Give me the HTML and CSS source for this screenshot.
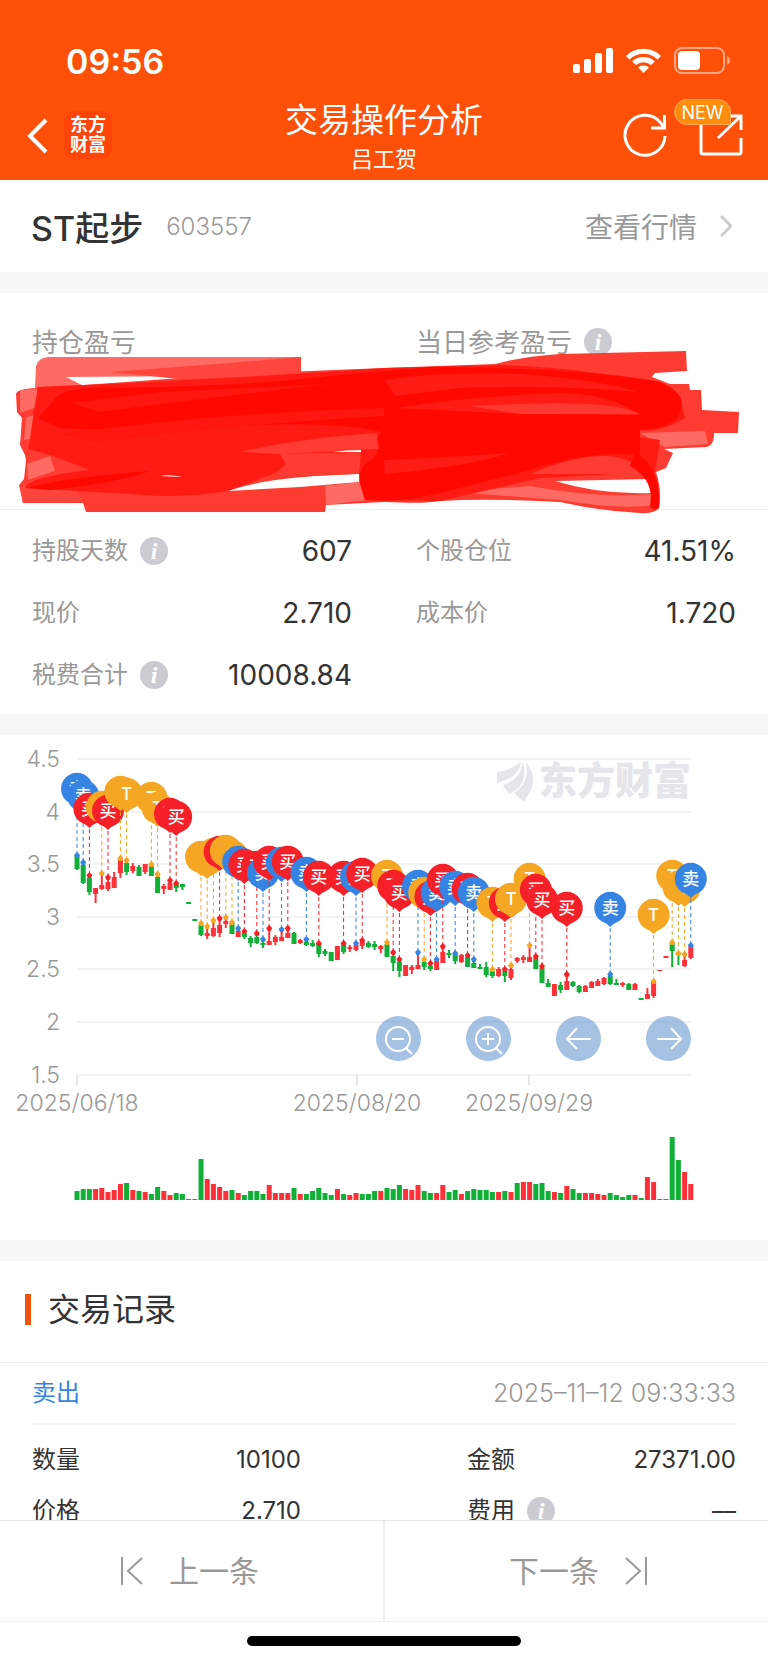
FILE: index.html
```html
<!DOCTYPE html>
<html lang="zh-CN">
<head>
    <meta charset="UTF-8">
    <meta name="viewport" content="width=device-width, initial-scale=1.0">
    <title>交易操作分析</title>
    <link rel="stylesheet" href="styles.css">
</head>
<body>
    <header class="header">
        <div class="status-bar">
            <span class="time">09:56</span>
            <svg class="status-icons" width="160" height="28" viewBox="0 0 160 28" aria-hidden="true">
                <rect x="1" y="17" width="7" height="9" rx="2"/>
                <rect x="12" y="12" width="7" height="14" rx="2"/>
                <rect x="23" y="6" width="7" height="20" rx="2"/>
                <rect x="34" y="1" width="7" height="25" rx="2"/>
                <path d="M54 9 A24.500 24.500 0 0 1 89 9 L85.500 12.500 A20 20 0 0 0 57.500 12.500 Z"/>
                <path d="M60 14.500 A17 17 0 0 1 83 14.500 L79 18 A11.500 11.500 0 0 0 64 18 Z"/>
                <path d="M66 20.500 A8.500 8.500 0 0 1 77 20.500 L71.500 26 Z"/>
                <rect class="battery" x="103" y="1" width="49" height="25" rx="7"/>
                <rect x="106" y="4" width="22" height="19" rx="4"/>
                <path class="battery-cap" d="M155 9 Q158 10 158 13.500 Q158 17 155 18 Z"/>
            </svg>
        </div>
        <div class="nav-bar">
            <div class="nav-left">
                <button class="icon-button" aria-label="返回">
                    <svg width="24" height="40" viewBox="0 0 24 40"><path d="M22 5 L6 21 L22 37" stroke-width="4"/></svg>
                </button>
                <a href="#" class="logo">东方<br>财富</a>
            </div>
            <div class="nav-title">
                <h1>交易操作分析</h1>
                <p>吕工贺</p>
            </div>
            <div class="nav-right">
                <button class="icon-button" aria-label="刷新">
                    <svg width="46" height="46" viewBox="0 0 46 46"><path d="M43 24 A20 20 0 1 1 38 10 L42 15 M42.500 3 V16 H29"/></svg>
                </button>
                <button class="icon-button share" aria-label="分享">
                    <svg width="46" height="46" viewBox="0 0 46 46"><path d="M3 13 V40 Q3 42 5 42 H41 Q43 42 43 40 V26 M29 4 H43 V18 M43 4 L20 26"/></svg>
                    <span class="badge">NEW</span>
                </button>
            </div>
        </div>
    </header>

    <main>
        <section class="stock">
            <h2>ST起步</h2>
            <span class="code">603557</span>
            <a href="#">查看行情
                <svg width="12" height="22" viewBox="0 0 12 22" aria-hidden="true"><path d="M1 1 L11 11 L1 21"/></svg>
            </a>
        </section>

        <section class="summary">
            <div class="profit">
                <div>持仓盈亏</div>
                <div>当日参考盈亏 <button class="info" aria-label="说明">i</button></div>
                <svg class="scribble" viewBox="0 340 768 180" aria-hidden="true">
                    <path fill="#ff6a62" d="M35 388 L36 366 Q38 358 48 357 L301 357 L301 374 L200 376 L66 377 L84 386 Z"/>
                    <path fill="#ff3b32" fill-rule="evenodd" d="M38 387 L85 385 L180 378 L260 373 L384 368 L495 364 Q520 357 560 354 L686 351 L687 371 L655 373 L652 377 L670 384 L689 384 L690 390 L701 390 L702 410 L739 412 L738 433 L714 433 Q714 446 706 447 L664 449 L673 453 L666 468 L656 472 Q662 490 659 508 Q655 514 640 513 Q600 511 560 502 Q490 498 440 501 Q425 504 384 502 L326 505 L325 512 L86 512 L83 503 L23 503 L19 485 L24 479 L26 461 L25 455 L20 445 L22 418 L17 412 L16 394 Q17 389 36 388 Z M228 491 Q270 476 359 474 L359 482 L300 487 Z M555 481 L650 479 L652 493 Q600 495 555 481 Z"/>
                    <path fill="#ff6a62" d="M20 390 L37 389 L37 407 L20 413 Z M26 417 L36 415 L36 438 L24 440 Z M27 464 L50 456 L55 471 L28 480 Z M325 486 L360 482 L366 500 L326 505 Z M455 492 L530 486 Q600 499 652 494 L655 505 Q620 510 560 500 Z M640 433 L705 431 L708 444 L664 447 Z"/>
                    <path fill="#ff453d" d="M110 372 L230 363 L301 357 L301 375 L180 379 Z M20 486 L75 489 L84 502 L23 503 Z"/>
                    <path fill="#ff1b13" d="M38 387 Q210 380 384 368 L500 365 Q630 370 680 396 L685 418 Q660 433 640 430 L640 437 L660 440 L655 472 L540 478 L440 501 L365 500 L359 474 L361 452 L280 454 L288 468 L228 491 Q180 499 130 494 L25 488 Q28 477 90 470 L50 455 L28 449 L30 440 L34 410 Z"/>
                    <path fill="#ff3b32" d="M240 452 Q300 438 377 433 L378 449 Q320 452 285 454 L355 454 L355 474 L270 478 L288 462 L280 454 Z M530 474 Q570 457 600 456 Q630 455 645 474 Z"/>
                    <path fill="#fff" d="M333 452 Q345 450 361 450 L361 452 Z M160 476 Q170 474 182 477 Z"/>
                    <path fill="#ff0800" d="M54 400 Q60 386 120 388 Q250 386 330 376 L430 367 Q590 368 660 382 Q688 394 680 412 Q675 428 640 430 L640 455 Q590 450 530 470 L440 493 Q400 503 365 500 L360 484 Q358 466 372 460 L380 448 Q374 436 382 432 Q340 422 260 425 Q140 432 60 428 L38 418 Z M28 488 Q60 478 150 471 Q120 482 50 490 Z M635 452 Q662 468 659 508 Q652 511 650 506 Q655 480 630 466 Z"/>
                    <path fill="#ff1c14" d="M395 408 Q470 396 560 393 Q610 393 640 415 L520 414 Z M385 380 Q440 371 520 374 Q590 378 640 392 Q540 384 460 388 L395 396 Z M384 460 Q440 458 510 453 Q470 466 385 474 Z"/>
                    <path fill="#ff3830" d="M470 406 Q550 402 590 404 Q622 406 640 414 L520 414 Z"/>
                    <path fill="#ff160e" d="M60 434 Q220 412 384 408 L384 416 Q240 424 90 442 Z M70 403 L160 392 L330 384 Q190 400 100 412 Z"/>
                </svg>
            </div>
            <dl class="stats">
                <div><dt>持股天数 <button class="info" aria-label="说明">i</button></dt><dd>607</dd></div>
                <div><dt>个股仓位</dt><dd>41.51%</dd></div>
                <div><dt>现价</dt><dd>2.710</dd></div>
                <div><dt>成本价</dt><dd>1.720</dd></div>
                <div><dt>税费合计 <button class="info" aria-label="说明">i</button></dt><dd>10008.84</dd></div>
            </dl>
        </section>

        <section class="chart">
            <svg id="chart" viewBox="0 0 768 505" role="img" aria-label="K线图">
                <g class="watermark">
                    <path d="M497 37 Q510 36 521 27 Q520 42 497 48 Z M522 28 Q521 44 503 50 L509 59 Q529 50 523 28 Z M526 27 Q537 40 531 55 L524 67 L514 58 Q530 48 526 27 Z"/>
                    <text x="539" y="59">东方财富</text>
                </g>
            </svg>
            <div class="chart-tools">
                <button aria-label="缩小"><svg viewBox="0 0 45 45"><circle cx="22" cy="23" r="12"/><path d="M16 23 H28 M30 32 L36 38"/></svg></button>
                <button aria-label="放大"><svg viewBox="0 0 45 45"><circle cx="22" cy="23" r="12"/><path d="M16 23 H28 M22 17 V29 M30 32 L36 38"/></svg></button>
                <button aria-label="左移"><svg viewBox="0 0 45 45"><path d="M35 23 H11 M21 12 L11 23 L21 33"/></svg></button>
                <button aria-label="右移"><svg viewBox="0 0 45 45"><path d="M11 23 H35 M25 12 L35 23 L25 33"/></svg></button>
            </div>
        </section>

        <section class="records">
            <h2>交易记录</h2>
            <article class="record">
                <div class="record-head">
                    <span class="sell">卖出</span>
                    <time datetime="2025-11-12T09:33:33">2025–11–12 09:33:33</time>
                </div>
                <dl class="record-body">
                    <div><dt>数量</dt><dd>10100</dd></div>
                    <div><dt>金额</dt><dd>27371.00</dd></div>
                    <div><dt>价格</dt><dd>2.710</dd></div>
                    <div><dt>费用 <button class="info" aria-label="说明">i</button></dt><dd>––</dd></div>
                </dl>
            </article>
        </section>
    </main>

    <footer class="footer">
        <div class="pager">
            <button>
                <svg width="24" height="30" viewBox="0 0 24 30" aria-hidden="true"><path d="M2 1 V29 M22 2 L8 15 L22 28"/></svg>
                上一条
            </button>
            <button>
                下一条
                <svg width="24" height="30" viewBox="0 0 24 30" aria-hidden="true"><path d="M22 1 V29 M2 2 L16 15 L2 28"/></svg>
            </button>
        </div>
        <div class="home-bar"></div>
    </footer>

    <script src="chart.js"></script>
</body>
</html>
```

FILE: styles.css
```css
* {
    box-sizing: border-box;
}

body {
    margin: 0;
    height: 100vh;
    display: flex;
    flex-direction: column;
    background: #fff;
    color: #333;
    font-family: Inter, "Noto Sans CJK SC", sans-serif;
    font-size: 24px;
}

h1, h2, p, dl, dt, dd {
    margin: 0;
    font-weight: 400;
}

a {
    color: inherit;
    text-decoration: none;
}

button {
    padding: 0;
    border: none;
    background: none;
    color: inherit;
    font: inherit;
    cursor: pointer;
}

svg {
    display: block;
}

/* header */
.header {
    flex: none;
    background: #ff5009;
    color: #fff;
}

.status-bar {
    display: flex;
    align-items: center;
    justify-content: space-between;
    height: 90px;
    padding: 32px 36px 0 66px;
}

.time {
    font-size: 34px;
    font-weight: 600;
}

.status-icons {
    fill: #fff;
}

.battery {
    fill: none;
    stroke: #ffa784;
    stroke-width: 2;
}

.battery-cap {
    fill: #ffa784;
}

.nav-bar {
    display: grid;
    grid-template-columns: 1fr auto 1fr;
    align-items: center;
    height: 90px;
    padding: 0 24px;
}

.nav-left, .nav-right {
    display: flex;
    align-items: center;
}

.nav-left {
    gap: 16px;
}

.nav-right {
    justify-content: flex-end;
    gap: 30px;
}

.logo {
    width: 48px;
    height: 48px;
    padding-top: 4px;
    border-radius: 10px;
    background: #ff4508;
    font-size: 18px;
    line-height: 20px;
    font-weight: 700;
    text-align: center;
}

.nav-title {
    padding-top: 2px;
    text-align: center;
}

.nav-title h1 {
    font-size: 33px;
    line-height: 46px;
}

.nav-title p {
    font-size: 22px;
    line-height: 32px;
}

.icon-button svg {
    fill: none;
    stroke: #fff;
    stroke-width: 3;
}

.share {
    position: relative;
}

.badge {
    position: absolute;
    top: -13px;
    right: 13px;
    width: 57px;
    height: 26px;
    border: 1px solid #ffab5a;
    border-radius: 13px 13px 0 13px;
    background: #ff8c0c;
    font-size: 18px;
    line-height: 25px;
    text-align: center;
}

/* content */
main {
    flex: 1;
    min-height: 0;
    overflow: auto;
    scrollbar-width: none;
}

section {
    border-bottom: 21px solid #f7f7f7;
}

.stock {
    display: flex;
    align-items: center;
    height: 113px;
    padding: 0 36px 0 31px;
}

.stock h2 {
    font-size: 34px;
    font-weight: 500;
}

.code {
    margin-left: 23px;
    color: #999;
    font-weight: 300;
}

.stock a {
    display: flex;
    align-items: center;
    gap: 23px;
    margin-left: auto;
    color: #999;
    font-size: 28px;
}

.stock a svg {
    fill: none;
    stroke: #ccc;
    stroke-width: 3;
}

.profit {
    position: relative;
    display: grid;
    grid-template-columns: 1fr 1fr;
    column-gap: 64px;
    height: 217px;
    padding: 30px 32px 0;
    border-bottom: 1px solid #eee;
    color: #999;
    font-size: 26px;
    line-height: 40px;
}

.profit div, dt {
    display: flex;
    align-items: flex-start;
    gap: 12px;
}

.scribble {
    position: absolute;
    top: 47px;
    left: 0;
    width: 100%;
}

.info {
    width: 28px;
    height: 28px;
    margin-top: 5px;
    border-radius: 50%;
    background: #cbccd1;
    color: #fff;
    font: italic bold 24px/28px "Liberation Serif", serif;
}

.stats {
    display: grid;
    grid-template-columns: 1fr 1fr;
    gap: 24px 64px;
    padding: 22px 32px 20px;
    line-height: 38px;
}

.stats div, .record-body div {
    display: flex;
    justify-content: space-between;
}

.stats dt {
    color: #999;
}

.stats dd {
    font-size: 28px;
}

/* chart */
.chart {
    position: relative;
}

.grid {
    stroke: #f3f3f3;
    stroke-width: 2;
}

.tick {
    stroke: #e6e6e6;
    stroke-width: 2;
}

.axis {
    fill: #999;
    font-size: 23px;
    font-weight: 300;
}

.watermark {
    fill: #e5e5ea;
}

.watermark text {
    font-size: 38px;
    font-weight: 900;
}

.up {
    fill: #ff3038;
}

.down {
    fill: #10b038;
}

.buy {
    color: #f52028;
}

.sold {
    color: #3583e3;
}

.both {
    color: #f5a623;
}

.marker {
    fill: currentColor;
}

.marker line {
    stroke: currentColor;
    stroke-dasharray: 4 3;
}

.marker text {
    fill: #fff;
    font-size: 17px;
    font-weight: 500;
    text-anchor: middle;
}

.chart-tools {
    position: absolute;
    top: 281px;
    right: 10%;
    display: flex;
    gap: 45px;
}

.chart-tools button {
    width: 45px;
    height: 45px;
    border-radius: 50%;
    background: rgba(75, 131, 200, 0.5);
}

.chart-tools svg {
    fill: none;
    stroke: #fff;
    stroke-width: 2;
}

/* records */
.records h2 {
    display: flex;
    align-items: center;
    gap: 17px;
    height: 102px;
    padding: 0 0 4px 25px;
    border-bottom: 1px solid #eee;
    font-size: 32px;
    line-height: 44px;
}

.records h2::before {
    content: "";
    width: 6px;
    height: 31px;
    background: #f0540a;
}

.record {
    padding: 0 32px;
}

.record-head {
    display: flex;
    align-items: center;
    justify-content: space-between;
    height: 62px;
    border-bottom: 2px solid #f5f5f5;
    color: #999;
    line-height: 38px;
}

.record-head time {
    font-size: 25px;
    font-weight: 300;
}

.sell {
    color: #3583e3;
}

.record-body {
    display: grid;
    grid-template-columns: 1fr 1fr;
    gap: 13px 166px;
    padding: 16px 0;
    line-height: 38px;
}

/* footer */
.footer {
    flex: none;
    background: #fff;
}

.pager {
    display: flex;
    height: 102px;
    border-top: 1px solid #e8e8e8;
    border-bottom: 1px solid #f0f0f0;
}

.pager button {
    flex: 1;
    display: flex;
    align-items: center;
    justify-content: center;
    gap: 25px;
    color: #999;
    font-size: 30px;
    line-height: 42px;
}

.pager button:first-child {
    padding-right: 4px;
    border-right: 2px solid #eee;
}

.pager button:last-child {
    padding-left: 4px;
}

.pager svg {
    fill: none;
    stroke: #999;
    stroke-width: 2;
}

.home-bar {
    width: 274px;
    height: 10px;
    margin: 14px auto 17px;
    border-radius: 5px;
    background: #000;
}
```

FILE: chart.js
```js
var chart = document.getElementById('chart');
var left = 77;
var right = 691;
var step = 6.2;

// volume per day, g = down, r = up
var volumes = 'g9 g11 g11 r11 r12 r8 r10 r16 g17 r10 g9 r8 g6 g13 r9 r5 g7 g6 g1 g1 ' +
    'g41 r21 r16 r13 r9 g10 r7 g5 g9 g9 g6 r15 r7 r7 r7 g12 r6 g6 g9 g12 ' +
    'g7 g5 r11 g6 r5 r7 g6 g6 g9 r9 g12 g11 g15 r11 r10 r15 g9 g7 r7 r15 ' +
    'g8 g10 r6 g9 g11 g10 g10 g8 r8 g9 r8 g17 r18 r18 g16 g17 g9 r8 g7 r14 ' +
    'g11 g7 r7 r7 r6 r5 g7 g5 g3 g5 r5 g2 r23 r18 g1 g1 g63 g40 r28 r16';

// candles: colour, high, body top, body bottom, low
var candles = [
    ['g', 121, 121, 134, 135], ['g', 127, 130, 148, 149], ['g', 140, 143, 157, 160], ['r', 153, 153, 159, 168],
    ['r', 140, 150, 154, 155], ['r', 142, 147, 154, 156], ['r', 137, 142, 153, 153], ['r', 124, 125, 138, 143],
    ['g', 126, 128, 137, 140], ['r', 128, 131, 136, 138], ['g', 130, 132, 141, 141], ['r', 129, 129, 137, 139],
    ['g', 128, 131, 141, 141], ['g', 139, 142, 158, 158], ['r', 149, 151, 154, 159], ['r', 146, 148, 155, 155],
    ['g', 148, 149, 153, 157], ['g', 149, 149, 152, 155], ['g', 167, 167, 169, 169], ['g', 184, 184, 186, 186],
    ['g', 188, 190, 200, 201], ['r', 192, 198, 201, 204], ['r', 187, 193, 201, 202], ['r', 183, 190, 198, 202],
    ['r', 185, 186, 189, 193], ['g', 188, 188, 199, 199], ['r', 193, 196, 202, 202], ['g', 197, 198, 202, 204],
    ['g', 201, 203, 208, 212], ['g', 200, 202, 208, 209], ['g', 205, 208, 210, 213], ['r', 193, 206, 210, 210],
    ['r', 200, 202, 207, 210], ['r', 194, 202, 206, 206], ['r', 193, 198, 203, 203], ['g', 197, 198, 209, 209],
    ['r', 204, 205, 208, 209], ['g', 204, 207, 210, 211], ['g', 205, 208, 211, 212], ['g', 208, 209, 219, 222],
    ['g', 214, 216, 219, 221], ['g', 217, 217, 226, 226], ['r', 211, 211, 225, 225], ['g', 208, 209, 217, 219],
    ['r', 210, 212, 214, 217], ['r', 208, 210, 215, 216], ['r', 205, 207, 211, 214], ['g', 206, 208, 212, 213],
    ['g', 206, 209, 212, 215], ['r', 210, 211, 214, 218], ['g', 208, 209, 222, 222], ['g', 218, 221, 228, 236],
    ['g', 225, 227, 236, 242], ['r', 230, 230, 241, 241], ['r', 230, 232, 235, 239], ['r', 217, 230, 234, 234],
    ['g', 225, 227, 232, 235], ['g', 228, 231, 234, 236], ['r', 225, 226, 235, 235], ['r', 211, 217, 228, 228],
    ['g', 215, 218, 220, 223], ['g', 218, 219, 226, 229], ['r', 219, 220, 227, 228], ['g', 221, 222, 232, 232],
    ['g', 225, 228, 233, 233], ['g', 229, 232, 234, 234], ['g', 227, 232, 240, 242], ['g', 234, 236, 241, 243],
    ['r', 232, 234, 241, 242], ['g', 234, 236, 241, 247], ['r', 230, 234, 243, 245], ['r', 222, 223, 226, 228],
    ['r', 220, 222, 225, 228], ['r', 210, 222, 227, 227], ['g', 221, 223, 234, 234], ['g', 231, 233, 248, 248],
    ['g', 244, 248, 252, 252], ['r', 249, 249, 261, 261], ['g', 247, 250, 255, 258], ['r', 239, 246, 255, 255],
    ['g', 246, 247, 251, 252], ['g', 250, 251, 257, 258], ['r', 250, 251, 257, 257], ['r', 246, 247, 253, 253],
    ['r', 244, 246, 251, 251], ['r', 242, 243, 249, 250], ['g', 240, 241, 249, 250], ['g', 244, 248, 250, 250],
    ['r', 247, 248, 250, 252], ['g', 248, 249, 255, 255], ['r', 248, 249, 255, 255], ['g', 263, 263, 265, 265],
    ['r', 253, 259, 264, 264], ['r', 246, 247, 261, 263], ['r', 235, 235, 236, 236], ['r', 221, 221, 223, 223],
    ['g', 207, 208, 216, 232], ['g', 218, 219, 220, 230], ['r', 219, 225, 231, 232], ['r', 210, 211, 223, 224]
];

// trades: day, B = buy, S = sell, T = both, y of the dot
var trades = '0S120 1S127 2B140 4T138 5B142 7T123 8T125 12T129 13T139 15B145 16B148 ' +
    '20T188 21T191 22T185 23B183 24T182 25T187 26S193 27B196 29B198 30S204 31B193 33S194 34B193 ' +
    '37S204 39B208 43B208 45S208 46B205 50T207 51B217 52B224 55S217 56T224 57B228 58S224 59B211 ' +
    '61S218 63B220 64S224 67T234 69B234 70T230 73T210 74B221 75B231 79B239 86S239 93T246 ' +
    '96T207 97T218 98T219 99S210';
var kinds = {
    B: { name: 'buy', text: '买' },
    S: { name: 'sold', text: '卖' },
    T: { name: 'both', text: 'T' }
};

function dayX(i) {
    return left + i * step;
}

function bar(color, x, y, width, height) {
    return '<rect class="' + (color === 'g' ? 'down' : 'up') + '" x="' + (x - width / 2).toFixed(1) +
        '" y="' + y + '" width="' + width + '" height="' + height + '"/>';
}

var html = '';

// price grid
for (var i = 0; i < 7; i++) {
    var y = Math.round(24 + i * 52.6);
    html += '<line class="grid" x1="' + left + '" x2="' + right + '" y1="' + y + '" y2="' + y + '"/>';
    html += '<text class="axis" x="60" y="' + (y + 8) + '" text-anchor="end">' + (4.5 - i * 0.5) + '</text>';
}

[[77, '2025/06/18'], [357, '2025/08/20'], [529, '2025/09/29']].forEach(function (d) {
    html += '<line class="tick" x1="' + d[0] + '" x2="' + d[0] + '" y1="340" y2="350"/>';
    html += '<text class="axis" x="' + d[0] + '" y="376" text-anchor="middle">' + d[1] + '</text>';
});

candles.forEach(function (c, i) {
    html += bar(c[0], dayX(i), c[1], 2, c[4] - c[1]);
    html += bar(c[0], dayX(i), c[2], 5, c[3] - c[2]);
});

volumes.split(' ').forEach(function (v, i) {
    var height = Number(v.slice(1));
    html += bar(v[0], dayX(i), 465 - height, 5, height);
});

trades.split(' ').forEach(function (t) {
    var parts = t.match(/(\d+)([BST])(\d+)/);
    var kind = kinds[parts[2]];
    html += '<g class="marker ' + kind.name + '" transform="translate(' + dayX(Number(parts[1])).toFixed(1) + ' ' + parts[3] + ')">' +
        '<line y1="-46" y2="0"/>' +
        '<path d="M0 -3 L3 0 L1.5 3 H-1.5 L-3 0 Z"/>' +
        '<path d="M0 -47 Q-4 -51 -9 -53 A16 16 0 1 1 9 -53 Q4 -51 0 -47 Z"/>' +
        '<text y="-60">' + kind.text + '</text></g>';
});

chart.insertAdjacentHTML('beforeend', html);
```
